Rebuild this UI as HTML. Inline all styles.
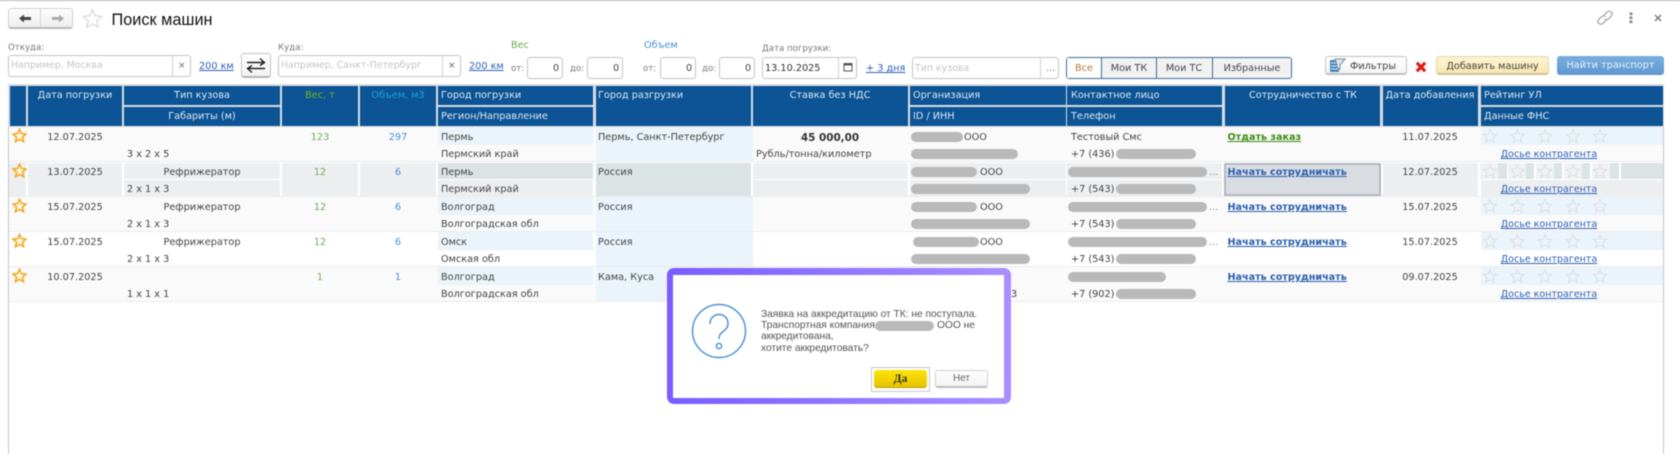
<!DOCTYPE html>
<html lang="ru"><head><meta charset="utf-8"><title>Поиск машин</title>
<style>
html,body{margin:0;padding:0;background:#fff}
#p{position:relative;width:1680px;height:454px;overflow:hidden;background:#fff;font-family:"DejaVu Sans","Liberation Sans",sans-serif;font-size:9.7px;color:#444;filter:blur(.42px)}
#p div,#p span.a,#p a,#p svg.a{position:absolute}
.t{white-space:nowrap;line-height:12px;height:12px;margin-top:1px}
.c{transform:translateX(-50%)}
.h{background:#0c5495}
.w{color:#dfe8f2}
.b{border:1px solid #c4c4c4;border-radius:3px;background:#fff;box-sizing:border-box}
.ph{color:#c6c6c6;font-size:9.4px}
.lb{color:#777;font-size:8.6px}
.lk{color:#2f62b8;text-decoration:underline}
.t.d{margin-top:0;font:10.2px/12px 'Liberation Sans',sans-serif;color:#555}
.bl{background:#b9b9b9;border-radius:5px;height:10px}
.btn{box-sizing:border-box;border-radius:3px;text-align:center;line-height:20px;white-space:nowrap}
.m{color:#2a5db0;font-weight:bold;text-decoration:underline;font-size:9.6px}
.dk{font-size:9.5px}
.g{color:#6fae60}.v{color:#4a90d9}
</style></head><body>
<svg width="0" height="0" style="position:absolute"><defs><path id="st" d="M10 1.6 12.5 7.4 18.8 8 14 12.2 15.5 18.4 10 15.1 4.5 18.4 6 12.2 1.2 8 7.5 7.4Z"/></defs></svg>
<div id="p">
<div style="left:0;top:0;width:1680px;height:1px;background:#b5b5b5"></div>

<!-- toolbar -->
<div class="b" style="left:8px;top:8px;width:65px;height:21px;background:linear-gradient(#fdfdfd,#eeeeee);border-color:#d0d0d0;border-bottom:2px solid #b9b9b9"></div>
<div style="left:40px;top:9px;width:1px;height:19px;background:#d5d5d5"></div>
<svg class="a" style="left:18px;top:13px" width="14" height="11"><path d="M1 5.5 6 1.5V4H13V7H6V9.5Z" fill="#444"/></svg>
<svg class="a" style="left:51px;top:13px" width="14" height="11"><path d="M13 5.5 8 1.5V4H1V7H8V9.5Z" fill="#aaa"/></svg>
<svg class="a" style="left:82px;top:8px" width="21" height="21" viewBox="0 0 20 20"><use href="#st" fill="#fff" stroke="#d3d3d3" stroke-width="1"/></svg>
<div class="t" style="left:111.5px;top:9px;height:20px;font:16.3px/20px 'Liberation Sans',sans-serif;color:#111">Поиск машин</div>

<svg class="a" style="left:1596px;top:10px" width="18" height="16" viewBox="0 0 18 16"><g fill="none" stroke="#a0a0a0" stroke-width="1.2"><path d="M8 5 11 2.2C12.3 1 14.2 1 15.3 2.2S16.3 5 15.2 6.2L12.4 9C11.2 10.1 9.5 10 8.5 8.9"/><path d="M10 10.5 7 13.4C5.8 14.6 3.9 14.6 2.8 13.4S1.7 10.6 2.8 9.4L5.6 6.7C6.8 5.5 8.5 5.6 9.5 6.7"/></g></svg>
<svg class="a" style="left:1629px;top:12px" width="4" height="12"><g fill="#888"><rect x="0.5" y="0.5" width="3" height="2.6"/><rect x="0.5" y="4.5" width="3" height="2.6"/><rect x="0.5" y="8.5" width="3" height="2.6"/></g></svg>
<svg class="a" style="left:1653px;top:13px" width="10" height="10"><path d="M2 2 8 8M8 2 2 8" stroke="#777" stroke-width="1.4"/></svg>

<!-- filters -->
<div class="t lb" style="left:8px;top:41px">Откуда:</div>
<div class="b" style="left:8px;top:55px;width:183px;height:22px"></div>
<div style="left:172px;top:56px;width:1px;height:20px;background:#d0d0d0"></div>
<div class="t ph" style="left:11px;top:59px">Например, Москва</div>
<div class="t" style="left:178px;top:59px;color:#666;font-size:9px">×</div>
<div class="t lk" style="left:199px;top:59.5px">200 км</div>

<div class="b" style="left:241px;top:53px;width:30px;height:25px;background:linear-gradient(#fff,#f3f3f3);border-bottom:2px solid #b5b5b5"></div>
<svg class="a" style="left:246px;top:57px" width="20" height="17"><g fill="none" stroke="#222" stroke-width="1.4"><path d="M1 5.5H18M14 1.5 18.5 5.5 14 8.5"/><path d="M19 11.5H2M6 8.5 1.5 11.5 6 15.5"/></g></svg>

<div class="t lb" style="left:278px;top:41px">Куда:</div>
<div class="b" style="left:278px;top:55px;width:183px;height:22px"></div>
<div style="left:442px;top:56px;width:1px;height:20px;background:#d0d0d0"></div>
<div class="t ph" style="left:281px;top:59px">Например, Санкт-Петербург</div>
<div class="t" style="left:448px;top:59px;color:#666;font-size:9px">×</div>
<div class="t lk" style="left:469px;top:59.5px">200 км</div>

<div class="t" style="left:511px;top:39px;color:#6aa84f">Вес</div>
<div class="t lb" style="left:511px;top:62px">от:</div>
<div class="b" style="left:527px;top:57px;width:36px;height:22px"></div>
<div class="t" style="left:553px;top:62px">0</div>
<div class="t lb" style="left:570px;top:62px">до:</div>
<div class="b" style="left:587px;top:57px;width:36px;height:22px"></div>
<div class="t" style="left:613px;top:62px">0</div>
<div class="t" style="left:644px;top:39px;color:#4a90d9">Объем</div>
<div class="t lb" style="left:643px;top:62px">от:</div>
<div class="b" style="left:660px;top:57px;width:36px;height:22px"></div>
<div class="t" style="left:686px;top:62px">0</div>
<div class="t lb" style="left:702px;top:62px">до:</div>
<div class="b" style="left:719px;top:57px;width:36px;height:22px"></div>
<div class="t" style="left:745px;top:62px">0</div>

<div class="t lb" style="left:762px;top:42px">Дата погрузки:</div>
<div class="b" style="left:762px;top:57px;width:95px;height:22px"></div>
<div style="left:838px;top:58px;width:1px;height:20px;background:#d0d0d0"></div>
<div class="t" style="left:765px;top:62px;color:#333">13.10.2025</div>
<svg class="a" style="left:843px;top:62px" width="10" height="10"><rect x="1" y="1.5" width="8" height="7.5" fill="#fff" stroke="#555"/><rect x="1" y="1" width="8" height="2.5" fill="#555"/></svg>
<div class="t lk" style="left:866px;top:62px">+ 3 дня</div>
<div class="b" style="left:912px;top:57px;width:147px;height:22px"></div>
<div style="left:1040px;top:58px;width:1px;height:20px;background:#d0d0d0"></div>
<div class="t ph" style="left:915px;top:62px">Тип кузова</div>
<div class="t" style="left:1046px;top:62px;color:#777">...</div>

<div style="left:1066px;top:57px;width:226px;height:22px;box-sizing:border-box;border:1px solid #3d6a96;border-radius:3px;background:#f1f1f1"></div>
<div style="left:1067px;top:58px;width:34px;height:20px;background:#fff"></div>
<div style="left:1101px;top:58px;width:1px;height:20px;background:#3d6a96"></div>
<div style="left:1156px;top:58px;width:1px;height:20px;background:#3d6a96"></div>
<div style="left:1212px;top:58px;width:1px;height:20px;background:#3d6a96"></div>
<div class="t c" style="left:1084px;top:62px;color:#b8763a">Все</div>
<div class="t c" style="left:1129px;top:62px">Мои ТК</div>
<div class="t c" style="left:1184px;top:62px">Мои ТС</div>
<div class="t c" style="left:1252px;top:62px">Избранные</div>

<div class="b" style="left:1325px;top:56px;width:82px;height:19px;background:linear-gradient(#fff,#f4f4f4);border-bottom:2px solid #c0c0c0"></div>
<svg class="a" style="left:1329px;top:58px" width="17" height="15"><rect x="1" y="2" width="9" height="12" fill="#4a86b8"/><path d="M2 5H9M2 8H9M2 11H9" stroke="#dcebf7"/><path d="M6 1H16L11 7V11L8 10V7Z" fill="#dfe6ec" stroke="#6d8ea8"/></svg>
<div class="t" style="left:1350px;top:60px">Фильтры</div>
<svg class="a" style="left:1415px;top:61px" width="12" height="12"><path d="M1.8 1.8 10.2 10.2M10.2 1.8 1.8 10.2" stroke="#e01b1b" stroke-width="3.2"/></svg>
<div class="btn" style="left:1436px;top:56px;width:113px;height:19px;background:linear-gradient(#fdf4d3,#f7e7b3);border:1px solid #e0d5a8;border-bottom:2px solid #cfc398;color:#444">Добавить машину</div>
<div class="btn" style="left:1557px;top:56px;width:107px;height:19px;background:linear-gradient(#79aee0,#5f97cf);color:#e8f1fa">Найти транспорт</div>

<!-- grid frame -->
<div style="left:8px;top:84px;width:1656px;height:370px;box-sizing:border-box;border:1px solid #c6c6c6;border-bottom:none"></div>
<div style="left:8px;top:84px;width:1656px;height:43px;background:#d9dee2"></div>

<!-- header -->
<div class="h" style="left:10px;top:86px;width:16px;height:40px"></div>
<div class="h" style="left:28px;top:86px;width:94px;height:40px"></div>
<div class="h" style="left:124px;top:86px;width:156px;height:19px"></div>
<div class="h" style="left:124px;top:107px;width:156px;height:19px"></div>
<div class="h" style="left:282px;top:86px;width:76px;height:40px"></div>
<div class="h" style="left:360px;top:86px;width:76px;height:40px"></div>
<div class="h" style="left:438px;top:86px;width:155px;height:19px"></div>
<div class="h" style="left:438px;top:107px;width:155px;height:19px"></div>
<div class="h" style="left:596px;top:86px;width:155px;height:40px"></div>
<div class="h" style="left:753px;top:86px;width:155px;height:40px"></div>
<div class="h" style="left:910px;top:86px;width:156px;height:19px"></div>
<div class="h" style="left:910px;top:107px;width:156px;height:19px"></div>
<div class="h" style="left:1067px;top:86px;width:155px;height:19px"></div>
<div class="h" style="left:1067px;top:107px;width:155px;height:19px"></div>
<div class="h" style="left:1225px;top:86px;width:155px;height:40px"></div>
<div class="h" style="left:1383px;top:86px;width:95px;height:40px"></div>
<div class="h" style="left:1481px;top:86px;width:182px;height:19px"></div>
<div class="h" style="left:1481px;top:107px;width:182px;height:19px"></div>

<div class="t w c" style="left:75px;top:89px">Дата погрузки</div>
<div class="t w c" style="left:202px;top:89px">Тип кузова</div>
<div class="t w c" style="left:202px;top:110px">Габариты (м)</div>
<div class="t c" style="left:320px;top:89px;color:#78b51e">Вес, т</div>
<div class="t c" style="left:398px;top:89px;color:#1aa2e2">Объем, м3</div>
<div class="t w" style="left:441px;top:89px">Город погрузки</div>
<div class="t w" style="left:441px;top:110px">Регион/Направление</div>
<div class="t w" style="left:598px;top:89px">Город разгрузки</div>
<div class="t w c" style="left:830px;top:89px">Ставка без НДС</div>
<div class="t w" style="left:913px;top:89px">Организация</div>
<div class="t w" style="left:913px;top:110px">ID / ИНН</div>
<div class="t w" style="left:1071px;top:89px">Контактное лицо</div>
<div class="t w" style="left:1071px;top:110px">Телефон</div>
<div class="t w c" style="left:1303px;top:89px">Сотрудничество с ТК</div>
<div class="t w c" style="left:1430px;top:89px">Дата добавления</div>
<div class="t w" style="left:1484px;top:89px">Рейтинг УЛ</div>
<div class="t w" style="left:1484px;top:110px">Данные ФНС</div>

<!-- row backgrounds -->
<div style="left:9px;top:127px;width:1654px;height:34px;background:#fafafa"></div>
<div style="left:9px;top:161px;width:1654px;height:1px;background:#ececec"></div>
<div style="left:9px;top:196px;width:1654px;height:1px;background:#ececec"></div>
<div style="left:9px;top:197px;width:1654px;height:34px;background:#fafafa"></div>
<div style="left:9px;top:231px;width:1654px;height:1px;background:#ececec"></div>
<div style="left:9px;top:266px;width:1654px;height:1px;background:#ececec"></div>
<div style="left:9px;top:267px;width:1654px;height:34px;background:#fafafa"></div>
<div style="left:9px;top:301px;width:1654px;height:1px;background:#ececec"></div>

<!-- blue cells -->
<div style="left:438px;top:127px;width:155px;height:18px;background:#eaf4fa"></div>
<div style="left:596px;top:127px;width:157px;height:34px;background:#eaf4fa"></div>
<div style="left:1481px;top:127px;width:182px;height:18px;background:#eaf4fa"></div>
<div style="left:438px;top:197px;width:155px;height:18px;background:#eaf4fa"></div>
<div style="left:596px;top:197px;width:157px;height:34px;background:#eaf4fa"></div>
<div style="left:1481px;top:197px;width:182px;height:18px;background:#eaf4fa"></div>
<div style="left:438px;top:232px;width:155px;height:18px;background:#eaf4fa"></div>
<div style="left:596px;top:232px;width:157px;height:34px;background:#eaf4fa"></div>
<div style="left:1481px;top:232px;width:182px;height:18px;background:#eaf4fa"></div>
<div style="left:438px;top:267px;width:155px;height:18px;background:#eaf4fa"></div>
<div style="left:596px;top:267px;width:157px;height:34px;background:#eaf4fa"></div>
<div style="left:1481px;top:267px;width:182px;height:18px;background:#eaf4fa"></div>

<!-- selected row -->
<div style="left:9px;top:163px;width:17px;height:33px;background:#eceef0"></div>
<div style="left:28px;top:163px;width:94px;height:33px;background:#eceef0"></div>
<div style="left:124px;top:163px;width:156px;height:16px;background:#eceef0"></div>
<div style="left:124px;top:180px;width:156px;height:16px;background:#eceef0"></div>
<div style="left:282px;top:163px;width:76px;height:33px;background:#eceef0"></div>
<div style="left:360px;top:163px;width:76px;height:33px;background:#eceef0"></div>
<div style="left:438px;top:163px;width:155px;height:16px;background:#dbe3e5"></div>
<div style="left:438px;top:180px;width:155px;height:16px;background:#eceef0"></div>
<div style="left:596px;top:163px;width:155px;height:33px;background:#dbe3e5"></div>
<div style="left:753px;top:163px;width:155px;height:16px;background:#eceef0"></div>
<div style="left:753px;top:180px;width:155px;height:16px;background:#eceef0"></div>
<div style="left:910px;top:163px;width:156px;height:16px;background:#eceef0"></div>
<div style="left:910px;top:180px;width:156px;height:16px;background:#eceef0"></div>
<div style="left:1067px;top:163px;width:155px;height:16px;background:#eceef0"></div>
<div style="left:1067px;top:180px;width:155px;height:16px;background:#eceef0"></div>
<div style="left:1224px;top:163px;width:157px;height:33px;box-sizing:border-box;background:#d9dde2;border:2px solid #b2b8c0"></div>
<div style="left:1383px;top:163px;width:95px;height:33px;background:#eceef0"></div>
<div style="left:1481px;top:180px;width:182px;height:16px;background:#eceef0"></div>
<div style="left:1480px;top:163px;width:18px;height:16px;background:#eef2f4"></div><div style="left:1498px;top:163px;width:9px;height:16px;background:#dbe3e5"></div>
<div style="left:1508px;top:163px;width:18px;height:16px;background:#eef2f4"></div><div style="left:1526px;top:163px;width:8px;height:16px;background:#dbe3e5"></div>
<div style="left:1536px;top:163px;width:18px;height:16px;background:#eef2f4"></div><div style="left:1554px;top:163px;width:8px;height:16px;background:#dbe3e5"></div>
<div style="left:1564px;top:163px;width:18px;height:16px;background:#eef2f4"></div><div style="left:1582px;top:163px;width:8px;height:16px;background:#dbe3e5"></div>
<div style="left:1592px;top:163px;width:18px;height:16px;background:#eef2f4"></div><div style="left:1610px;top:163px;width:9px;height:16px;background:#dbe3e5"></div>
<div style="left:1621px;top:163px;width:42px;height:16px;background:#dbe3e5"></div>

<!-- favourite stars -->
<svg class="a" style="left:12px;top:128px" width="15" height="15" viewBox="0 0 20 20"><use href="#st" fill="#fff6dc" stroke="#f5a623" stroke-width="2"/></svg>
<svg class="a" style="left:12px;top:163px" width="15" height="15" viewBox="0 0 20 20"><use href="#st" fill="#fff6dc" stroke="#f5a623" stroke-width="2"/></svg>
<svg class="a" style="left:12px;top:198px" width="15" height="15" viewBox="0 0 20 20"><use href="#st" fill="#fff6dc" stroke="#f5a623" stroke-width="2"/></svg>
<svg class="a" style="left:12px;top:233px" width="15" height="15" viewBox="0 0 20 20"><use href="#st" fill="#fff6dc" stroke="#f5a623" stroke-width="2"/></svg>
<svg class="a" style="left:12px;top:268px" width="15" height="15" viewBox="0 0 20 20"><use href="#st" fill="#fff6dc" stroke="#f5a623" stroke-width="2"/></svg>

<!-- row 1 -->
<div class="t c" style="left:75px;top:131px">12.07.2025</div>
<div class="t" style="left:127px;top:148px">3 x 2 x 5</div>
<div class="t c g" style="left:320px;top:131px">123</div>
<div class="t c v" style="left:398px;top:131px">297</div>
<div class="t" style="left:441px;top:131px">Пермь</div>
<div class="t" style="left:441px;top:148px">Пермский край</div>
<div class="t" style="left:598px;top:131px">Пермь, Санкт-Петербург</div>
<div class="t c" style="left:830px;top:131px;font-weight:bold;font-size:10.4px;color:#333">45 000,00</div>
<div class="t" style="left:756px;top:148px">Рубль/тонна/километр</div>
<div class="bl" style="left:911px;top:132px;width:52px"></div>
<div class="t" style="left:964px;top:131px">ООО</div>
<div class="bl" style="left:911px;top:149px;width:107px"></div>
<div class="t" style="left:1071px;top:131px">Тестовый Смс</div>
<div class="t" style="left:1071px;top:148px">+7 (436)</div>
<div class="bl" style="left:1116px;top:149px;width:80px"></div>
<div class="t" style="left:1227.5px;top:131px;color:#3c8a10;font-weight:bold;text-decoration:underline;font-size:9.6px">Отдать заказ</div>
<div class="t c" style="left:1430px;top:131px">11.07.2025</div>
<div class="t c lk dk" style="left:1549px;top:148px">Досье контрагента</div>

<!-- row 2 -->
<div class="t c" style="left:75px;top:166px">13.07.2025</div>
<div class="t c" style="left:202px;top:166px">Рефрижератор</div>
<div class="t" style="left:127px;top:183px">2 x 1 x 3</div>
<div class="t c g" style="left:320px;top:166px">12</div>
<div class="t c v" style="left:398px;top:166px">6</div>
<div class="t" style="left:441px;top:166px">Пермь</div>
<div class="t" style="left:441px;top:183px">Пермский край</div>
<div class="t" style="left:598px;top:166px">Россия</div>
<div class="bl" style="left:911px;top:167px;width:66px"></div>
<div class="t" style="left:980px;top:166px">ООО</div>
<div class="bl" style="left:911px;top:184px;width:119px"></div>
<div class="bl" style="left:1068px;top:167px;width:139px"></div>
<div class="t" style="left:1209px;top:166px;color:#888">...</div>
<div class="t" style="left:1071px;top:183px">+7 (543)</div>
<div class="bl" style="left:1116px;top:184px;width:80px"></div>
<div class="t m" style="left:1227.5px;top:166px">Начать сотрудничать</div>
<div class="t c" style="left:1430px;top:166px">12.07.2025</div>
<div class="t c lk dk" style="left:1549px;top:183px">Досье контрагента</div>

<!-- row 3 -->
<div class="t c" style="left:75px;top:201px">15.07.2025</div>
<div class="t c" style="left:202px;top:201px">Рефрижератор</div>
<div class="t" style="left:127px;top:218px">2 x 1 x 3</div>
<div class="t c g" style="left:320px;top:201px">12</div>
<div class="t c v" style="left:398px;top:201px">6</div>
<div class="t" style="left:441px;top:201px">Волгоград</div>
<div class="t" style="left:441px;top:218px">Волгоградская обл</div>
<div class="t" style="left:598px;top:201px">Россия</div>
<div class="bl" style="left:911px;top:202px;width:66px"></div>
<div class="t" style="left:980px;top:201px">ООО</div>
<div class="bl" style="left:911px;top:219px;width:119px"></div>
<div class="bl" style="left:1068px;top:202px;width:139px"></div>
<div class="t" style="left:1209px;top:201px;color:#888">...</div>
<div class="t" style="left:1071px;top:218px">+7 (543)</div>
<div class="bl" style="left:1116px;top:219px;width:80px"></div>
<div class="t m" style="left:1227.5px;top:201px">Начать сотрудничать</div>
<div class="t c" style="left:1430px;top:201px">15.07.2025</div>
<div class="t c lk dk" style="left:1549px;top:218px">Досье контрагента</div>

<!-- row 4 -->
<div class="t c" style="left:75px;top:236px">15.07.2025</div>
<div class="t c" style="left:202px;top:236px">Рефрижератор</div>
<div class="t" style="left:127px;top:253px">2 x 1 x 3</div>
<div class="t c g" style="left:320px;top:236px">12</div>
<div class="t c v" style="left:398px;top:236px">6</div>
<div class="t" style="left:441px;top:236px">Омск</div>
<div class="t" style="left:441px;top:253px">Омская обл</div>
<div class="t" style="left:598px;top:236px">Россия</div>
<div class="bl" style="left:913px;top:237px;width:66px"></div>
<div class="t" style="left:980px;top:236px">ООО</div>
<div class="bl" style="left:911px;top:254px;width:119px"></div>
<div class="bl" style="left:1068px;top:237px;width:139px"></div>
<div class="t" style="left:1209px;top:236px;color:#888">...</div>
<div class="t" style="left:1071px;top:253px">+7 (543)</div>
<div class="bl" style="left:1116px;top:254px;width:80px"></div>
<div class="t m" style="left:1227.5px;top:236px">Начать сотрудничать</div>
<div class="t c" style="left:1430px;top:236px">15.07.2025</div>
<div class="t c lk dk" style="left:1549px;top:253px">Досье контрагента</div>

<!-- row 5 -->
<div class="t c" style="left:75px;top:271px">10.07.2025</div>
<div class="t" style="left:127px;top:288px">1 x 1 x 1</div>
<div class="t c g" style="left:320px;top:271px">1</div>
<div class="t c v" style="left:398px;top:271px">1</div>
<div class="t" style="left:441px;top:271px">Волгоград</div>
<div class="t" style="left:441px;top:288px">Волгоградская обл</div>
<div class="t" style="left:598px;top:271px">Кама, Куса</div>
<div class="t" style="left:1011px;top:288px">3</div>
<div class="bl" style="left:1068px;top:272px;width:98px"></div>
<div class="t" style="left:1071px;top:288px">+7 (902)</div>
<div class="bl" style="left:1116px;top:289px;width:80px"></div>
<div class="t m" style="left:1227.5px;top:271px">Начать сотрудничать</div>
<div class="t c" style="left:1430px;top:271px">09.07.2025</div>
<div class="t c lk dk" style="left:1549px;top:288px">Досье контрагента</div>

<!-- rating stars -->
<svg class="a" style="left:1481px;top:127px" width="130" height="162" viewBox="0 0 130 162">
<g fill="none" stroke="#dcdfe2" stroke-width="1.4">
<g id="r1"><use href="#st" transform="translate(1.5 1.5) scale(.75)"/><use href="#st" transform="translate(29 1.5) scale(.75)"/><use href="#st" transform="translate(56.5 1.5) scale(.75)"/><use href="#st" transform="translate(84.5 1.5) scale(.75)"/><use href="#st" transform="translate(111.5 1.5) scale(.75)"/></g>
<use href="#r1" y="35"/><use href="#r1" y="70"/><use href="#r1" y="105"/><use href="#r1" y="140"/>
</g></svg>

<!-- dialog -->
<div style="left:667px;top:268px;width:344px;height:136px;border-radius:7px;background:linear-gradient(90deg,#7a5cff,#a98fff)"></div>
<div style="left:673px;top:275px;width:331px;height:123px;background:#fff"></div>
<svg class="a" style="left:690px;top:302px" width="58" height="58" viewBox="0 0 58 58"><g fill="none" stroke="#4f94d8" stroke-width="1.5"><circle cx="29" cy="29" r="26.5"/><path d="M20 22C20 16 24 12.5 29 12.5S38 16 38 21.5C38 26 35 28 32.5 30 30 32 29 33.5 29 37"/><circle cx="29" cy="44" r="2.6"/></g></svg>
<div class="t d" style="left:761px;top:309px">Заявка на аккредитацию от ТК: не поступала.</div>
<div class="t d" style="left:761px;top:320px">Транспортная компания</div>
<div class="bl" style="left:875px;top:321px;width:59px"></div>
<div class="t d" style="left:937px;top:320px">ООО не</div>
<div class="t d" style="left:761px;top:331px">аккредитована,</div>
<div class="t d" style="left:761px;top:343px">хотите аккредитовать?</div>
<div style="left:871px;top:367px;width:59px;height:25px;box-sizing:border-box;border:1px solid #c9c9c9"></div>
<div class="btn" style="left:874px;top:370px;width:53px;height:18px;background:linear-gradient(#fbe608,#e9c400);border-bottom:1px solid #b89d00;font:bold 11.5px/18px 'Liberation Serif',serif;color:#333">Да</div>
<div class="btn" style="left:935px;top:370px;width:53px;height:18px;background:linear-gradient(#fff,#f3f3f3);border:1px solid #d0d0d0;border-bottom:2px solid #bdbdbd;font:10px/16px 'Liberation Sans',sans-serif;color:#666">Нет</div>
</div>
</body></html>
